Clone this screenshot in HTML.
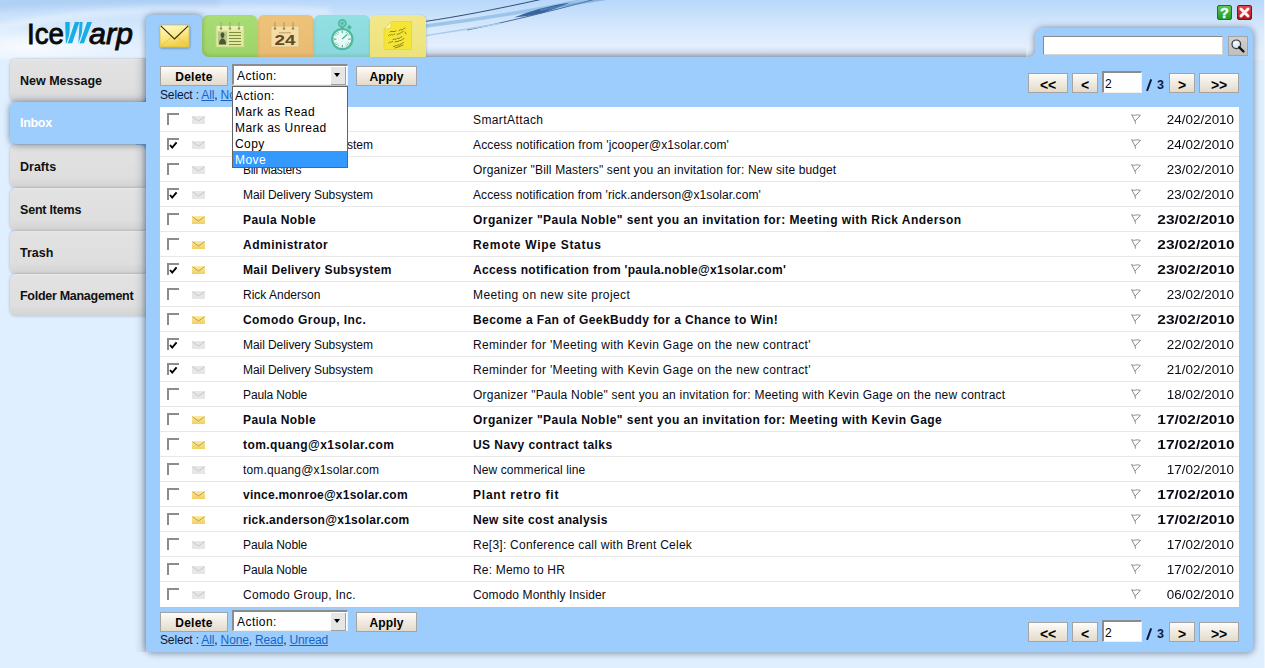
<!DOCTYPE html>
<html><head><meta charset="utf-8">
<style>
*{margin:0;padding:0;box-sizing:border-box}
html,body{width:1265px;height:668px;overflow:hidden}
body{position:relative;background:#dfefff;font-family:"Liberation Sans",sans-serif;color:#000}
.abs{position:absolute}
#topbg{position:absolute;left:0;top:0;width:1265px;height:60px;background:linear-gradient(#b7d7fa 0px,#cce3fb 18px,#dbebfd 34px,#e3effd 46px,#e6f1fd 58px)}
#panelwrap{position:absolute;left:0;top:0;width:1265px;height:668px;filter:drop-shadow(0 0 3.5px rgba(20,40,70,.42)) drop-shadow(1px 2px 3px rgba(20,40,70,.16))}
.blue{position:absolute;background:#9ccdfd}
.sbtn{position:absolute;left:10px;width:136px;height:43px;border-radius:6px;background:linear-gradient(#e9e9e9 0px,#e2e2e2 2px,#dedede 32px,#d2d2d2 43px);box-shadow:0 0 3px rgba(0,0,0,.25)}
.sbtn span{position:absolute;left:10px;top:14.5px;font-size:12.5px;font-weight:bold;color:#111;letter-spacing:0px}
.tab{position:absolute;top:15px;width:56px;height:42px;border-radius:6px 6px 0 0;box-shadow:inset 0 -2px 3px rgba(60,60,20,.12)}
.btn{position:absolute;height:20px;border:1px solid #a4a4a4;background:linear-gradient(#fefdfb 0%,#f1ece3 45%,#e3dacb 100%);font-size:11px;font-weight:bold;color:#000}
.btn span{position:absolute;left:0;right:0;top:4px;text-align:center;line-height:13px}
.pb span{font-size:14px;top:4.5px;letter-spacing:-0.3px}
.stxt{position:absolute;left:3px;top:3px;font-size:12px;line-height:14px;letter-spacing:0.45px;color:#000}
.arr{position:absolute;right:1px;top:1px;width:15px;height:18px;background:#e6e6e6;border-right:1px solid #a0a0a0;border-bottom:1px solid #a0a0a0}
.arr i{position:absolute;left:3px;top:6px;width:0;height:0;border-left:3.5px solid transparent;border-right:3.5px solid transparent;border-top:4px solid #000}
.seltxt{font-size:12px;color:#0c1838;letter-spacing:-0.15px}
.sel{position:absolute;background:#fff;border-top:2px solid #8c8c8c;border-left:2px solid #8c8c8c;border-right:1px solid #f0f0f0;border-bottom:1px solid #f0f0f0}
.lnk{color:#1565c8;text-decoration:underline}
#tbl{position:absolute;left:160px;top:107px;width:1079px;height:500px;background:#fff;box-shadow:0 1px 0 #a9c7e6}
.row:last-child{border-bottom-color:#fff}
.row{position:absolute;left:0;width:1079px;height:25px;border-bottom:1px solid #e8e8e8}
.row .cb{position:absolute;left:7px;top:6px;width:12px;height:12px;border-left:2px solid #8c8c8c;border-top:2px solid #8c8c8c}
.row .env{position:absolute;left:32px;top:9px;width:13px;height:8px}
.row .t{position:absolute;top:6px;font-size:12px;line-height:14px;white-space:nowrap;color:#0a0a14}
.row .s{left:83px}
.row .u{left:313px}
.row .fl{position:absolute;left:971px;top:7px;width:10px;height:10px;overflow:visible}
.row .d{position:absolute;right:4.5px;top:6px;font-size:12px;line-height:14px;color:#0a0a14}
.b .t,.b .d{font-weight:bold}
</style></head><body>
<div id="topbg"></div>
<svg class="abs" style="left:0;top:0" width="1265" height="58" viewBox="0 0 1265 58">
  <defs>
    <radialGradient id="glow" cx="0.5" cy="0.5" r="0.5"><stop offset="0" stop-color="#ffffff" stop-opacity=".8"/><stop offset="1" stop-color="#ffffff" stop-opacity="0"/></radialGradient>
  </defs>
  <filter id="gb" x="-20%" y="-100%" width="140%" height="300%"><feGaussianBlur stdDeviation="3"/></filter>
  <path d="M-20 6 Q80 -4 220 2" stroke="#a6c8ee" stroke-width="10" fill="none" opacity=".6" filter="url(#gb)"/>
  <path d="M-10 30 Q50 14 160 10 Q260 8 330 12" stroke="#ffffff" stroke-width="5" fill="none" opacity=".55" filter="url(#gb)"/>
  <ellipse cx="30" cy="46" rx="100" ry="18" fill="url(#glow)"/>
  <filter id="sb" x="-5%" y="-50%" width="110%" height="200%"><feGaussianBlur stdDeviation="0.45"/></filter>
  <g filter="url(#sb)">
  <path d="M426 26 Q520 14 600 -3" stroke="#8fbde4" stroke-width="3.6" fill="none" opacity=".8"/>
  <path d="M426 21.3 Q470 15 543 -1" stroke="#203c6a" stroke-width="0.9" fill="none"/>
  <path d="M514 17.5 Q540 7 570 2.5 Q543 15.5 514 17.5 Z" fill="#2a5692" opacity=".9"/>
  <path d="M467 30 Q520 19.5 596 -1" stroke="#2a4c82" stroke-width="0.8" fill="none"/>
  <path d="M426 35.6 Q462 30 500 23.5" stroke="#a8cbe8" stroke-width="1.3" fill="none"/>
  <path d="M540 10 Q580 3 625 -4" stroke="#5f94c8" stroke-width="2" fill="none" opacity=".55"/>
  </g>
</svg>

<!-- sidebar buttons -->
<div class="abs" style="left:136px;top:62px;width:12px;height:254px;background:#9ccdfd"></div>
<div class="sbtn" style="top:59px;border-radius:6px 0 6px 6px"><span>New Message</span></div>
<div class="sbtn" style="top:145px;border-radius:6px 6px 0 6px"><span>Drafts</span></div>
<div class="sbtn" style="top:188px;border-radius:6px 0 0 6px"><span style="letter-spacing:-0.2px">Sent Items</span></div>
<div class="sbtn" style="top:231px;border-radius:6px 0 0 6px"><span>Trash</span></div>
<div class="sbtn" style="top:274px;height:42px;border-radius:6px 0 0 6px"><span style="letter-spacing:-0.28px">Folder Management</span></div>

<!-- logo -->
<svg class="abs" style="left:0;top:0" width="146" height="58" viewBox="0 0 146 58">
  <text x="27" y="44" font-family="Liberation Sans" font-size="30" fill="#0a0a0a" stroke="#0a0a0a" stroke-width="0.9" textLength="37" lengthAdjust="spacingAndGlyphs">Ice</text>
  <g fill="#19ade6">
    <path d="M65.2 22 L69.8 22 L69.2 43.3 L65.8 43.3 Z"/>
    <path d="M67.3 43.3 L74.3 22" stroke="#e6f6ff" stroke-width="1.5"/>
    <path d="M67.8 43.3 L72.2 43.3 L79.4 22 L74.8 22 Z"/>
    <path d="M79.6 22 L82.6 22 L81.2 43.3 L78.4 43.3 Z"/>
    <path d="M79.3 43.3 L86.5 22" stroke="#e6f6ff" stroke-width="1.5"/>
    <path d="M79.8 43.3 L83.9 43.3 L92 22 L87 22 Z"/>
  </g>
  <text x="89" y="44" font-family="Liberation Sans" font-style="italic" font-size="30" fill="#0a0a0a" stroke="#0a0a0a" stroke-width="0.9" textLength="44" lengthAdjust="spacingAndGlyphs">arp</text>
</svg>
<div class="abs" style="left:420px;top:46px;width:606px;height:11px;background:linear-gradient(rgba(60,80,110,0),rgba(60,80,110,.1) 60%,rgba(60,80,110,.22))"></div>
<div class="abs" style="left:134px;top:58px;width:12px;height:594px;background:linear-gradient(to right,rgba(60,80,110,0),rgba(60,80,110,.07) 50%,rgba(60,80,110,.2))"></div>
<!-- panel (with shadow) -->
<div id="panelwrap">
  <div class="blue" style="left:146px;top:57px;width:1107px;height:595px;border-radius:0 0 6px 6px"></div>
  <div class="blue" style="left:146px;top:15px;width:56px;height:50px;border-radius:6px 6px 0 0"></div>
  <div class="blue" style="left:1035px;top:28px;width:218px;height:40px;border-radius:8px 7px 0 0"></div>
  <div class="abs" style="left:1029px;top:51px;width:6px;height:6px;background:radial-gradient(circle at 0 0,transparent 5.5px,#9ccdfd 6px)"></div>
  <div class="blue" style="left:10px;top:102px;width:150px;height:42px;border-radius:6px 0 0 6px"></div>
</div>
<div class="abs" style="left:20px;top:116px;font-size:12.5px;font-weight:bold;color:#fff;letter-spacing:-0.3px">Inbox</div>

<!-- other tabs -->
<div class="abs" style="left:200px;top:48px;width:10px;height:10px;background:#9ccdfd"></div>
<div class="tab" style="left:202px;background:linear-gradient(#a8dc74,#9dd46a);border-radius:7px 7px 0 7px;box-shadow:inset 2px -2px 3px rgba(60,60,20,.14)"></div>
<div class="tab" style="left:258px;background:linear-gradient(#efc27a,#e9bb72);border-radius:6px 6px 0 0"></div>
<div class="tab" style="left:314px;background:linear-gradient(#92e0e2,#8ad8dc);border-radius:6px 6px 0 0"></div>
<div class="tab" style="left:370px;background:linear-gradient(#f2e88a,#ece27c);border-radius:6px 6px 0 0;box-shadow:1px 0 2px rgba(0,0,0,.12)"></div>
<svg class="abs" style="left:202px;top:15px" width="224" height="42" viewBox="0 0 224 42">
  <!-- contacts -->
  <rect x="14" y="11" width="28" height="21" fill="#dfeaa0" stroke="#c4d27c" stroke-width="0.8"/>
  <rect x="15" y="11" width="26" height="4" fill="#e9f0b8"/>
  <g stroke="#9aab58" stroke-width="1" fill="none"><path d="M19 7 V13 M28 7 V13 M37 7 V13"/></g><g fill="#8a9c48"><circle cx="19" cy="13.6" r="1.2"/><circle cx="28" cy="13.6" r="1.2"/><circle cx="37" cy="13.6" r="1.2"/></g>
  <rect x="16" y="16.5" width="9" height="13" fill="#b9c68a"/>
  <path d="M17 29.5 Q17 24 20.5 23.5 Q18.3 22 18.5 19.5 Q19 17.3 20.5 17.3 Q22 17.3 22.5 19.5 Q22.7 22 20.5 23.5 Q24 24 24 29.5 Z" fill="#4b5a2c"/>
  <g stroke="#7f8f3c" stroke-width="1"><path d="M27 17.5 H39 M27 20.5 H39 M27 23.5 H39 M27 26.5 H39 M27 29.5 H39"/></g>
  <!-- calendar -->
  <rect x="69" y="11" width="28" height="21" fill="#f5dca2" stroke="#dcbc78" stroke-width="0.8"/>
  <g stroke="#b09060" stroke-width="1" fill="none"><path d="M73 7 V13 M82 7 V13 M91 7 V13"/></g><g fill="#a08050"><circle cx="73" cy="13.6" r="1.2"/><circle cx="82" cy="13.6" r="1.2"/><circle cx="91" cy="13.6" r="1.2"/></g>
  <path d="M77 17.8 H89" stroke="#a08050" stroke-width="0.7"/>
  <text x="83" y="30" text-anchor="middle" font-family="Liberation Sans" font-weight="bold" font-size="14" fill="#5e4a28" textLength="21" lengthAdjust="spacingAndGlyphs">24</text>
  <!-- stopwatch -->
  <circle cx="140.3" cy="8.4" r="3.6" fill="#7fcfc0" stroke="#4fb89f" stroke-width="1.6"/>
  <circle cx="140.3" cy="8.4" r="1.3" fill="#4fb89f"/>
  <rect x="138.9" y="11.5" width="2.8" height="2.5" fill="#4fb89f"/>
  <rect x="145.6" y="10.6" width="3.6" height="3.4" fill="#4fb89f" transform="rotate(40 147.4 12.3)"/>
  <circle cx="140.3" cy="24.1" r="11.2" fill="#4fb89f"/>
  <circle cx="140.3" cy="24.1" r="9" fill="#e8f8f5"/>
  <g stroke="#4fb89f" stroke-width="1.2">
    <path d="M140.3 15.6 V18.2 M140.3 30 V32.6 M131.8 24.1 H134.4 M146.2 24.1 H148.8"/>
    <path d="M134.3 18.1 L135.9 19.7 M144.7 28.5 L146.3 30.1 M134.3 30.1 L135.9 28.5 M144.7 19.7 L146.3 18.1" stroke-width="1"/>
    <path d="M136 16.9 L136.7 18.2 M144.6 16.9 L143.9 18.2 M133.1 19.8 L134.4 20.5 M147.5 19.8 L146.2 20.5 M133.1 28.4 L134.4 27.7 M147.5 28.4 L146.2 27.7 M136 31.3 L136.7 30 M144.6 31.3 L143.9 30" stroke-width="0.8"/>
    <path d="M140.3 24.1 L145 19.6" stroke-width="1.4"/>
  </g>
  <!-- note -->
  <path d="M189.5 6.5 L209.5 6.5 L209.5 34.5 L182 34.5 L182 14 Z" fill="#f5e534" stroke="#e0cc3a" stroke-width="0.6"/>
  <path d="M182 14 L189.5 6.5 L188.5 13 Z" fill="#fbf6b0" stroke="#d8c850" stroke-width="0.5"/>
  <g stroke="#6e6220" stroke-width="0.75" fill="none" stroke-linecap="round">
    <path d="M188 17 q1 -2 2 0 q1 -2 2 0 q1 -2 2 -1 M197 15.5 q2 -1.5 3 -0.5 q1 -1 3 -2"/>
    <path d="M186.5 20.5 q1 -1.5 2 0 q1 -2 2 -0.5 q1 -1 2 -1 M195 19.5 q2 -1 3 -1 q1 -1 3 -2 M203 17 l1 2"/>
    <path d="M191 24.5 q2 -1 3 0 q1 -2 3 -1 q1 -1 3 -2"/>
    <path d="M186.5 28 q1 -1.5 2 -0.5 q1 -1 2 -1 M193 27 q2 -1 3 -0.5 q2 -1.5 3 -1 q1 -1 3 -2"/>
    <path d="M191.5 31.5 q2 -0.5 3 -1 q2 -1 3 -0.5 q2 -1.5 4 -2.5 M193 33 q4 -1 8 -3"/>
  </g>
</svg>

<!-- mail icon -->
<svg class="abs" style="left:158px;top:23px" width="34" height="28" viewBox="0 0 34 28">
  <defs><linearGradient id="eg" x1="0" y1="0" x2="0.3" y2="1"><stop offset="0" stop-color="#fffcc8"/><stop offset="0.55" stop-color="#fbe98a"/><stop offset="1" stop-color="#f1cf48"/></linearGradient>
  <filter id="es" x="-20%" y="-20%" width="140%" height="150%"><feDropShadow dx="0.5" dy="1" stdDeviation="0.8" flood-color="#000" flood-opacity="0.35"/></filter></defs>
  <rect x="2" y="2" width="29" height="22" rx="1" fill="url(#eg)" stroke="#d6b84a" stroke-width="0.7" filter="url(#es)"/>
  <path d="M2.5 23.5 L13 14.5 M30.5 23.5 L20 14.5" fill="none" stroke="#d9bd55" stroke-width="0.7"/>
  <path d="M2.8 2.8 L16.5 16 L30.2 2.8" fill="none" stroke="#2e2818" stroke-width="1.05"/>
</svg>

<!-- help/close -->
<svg class="abs" style="left:1216px;top:4px" width="38" height="18" viewBox="0 0 38 18">
  <defs>
    <linearGradient id="hg" x1="0" y1="0" x2="0" y2="1"><stop offset="0" stop-color="#5cc95a"/><stop offset="1" stop-color="#1f9a22"/></linearGradient>
    <linearGradient id="cg" x1="0" y1="0" x2="0" y2="1"><stop offset="0" stop-color="#e8474c"/><stop offset="1" stop-color="#b5121a"/></linearGradient>
  </defs>
  <rect x="1.5" y="1.5" width="14" height="14" rx="1.5" fill="url(#hg)" stroke="#177a1a" stroke-width="1"/>
  <text x="8.5" y="14" text-anchor="middle" font-family="Liberation Sans" font-weight="bold" font-size="14.5" fill="#f8fff4" stroke="#f8fff4" stroke-width="0.4">?</text>
  <rect x="21.5" y="1.5" width="14" height="14" rx="1.5" fill="url(#cg)" stroke="#8a0c12" stroke-width="1"/>
  <path d="M25 5 L32 12 M32 5 L25 12" stroke="#fff4f4" stroke-width="3" stroke-linecap="round"/>
</svg>

<!-- search -->
<div class="abs" style="left:1043px;top:36px;width:180px;height:19px;background:#fff;border:1px solid #8a8a8a;border-right-color:#d4d4d4;border-bottom-color:#d4d4d4"></div>
<svg class="abs" style="left:1228px;top:36px" width="20" height="20" viewBox="0 0 20 20">
  <defs><linearGradient id="sg" x1="0" y1="0" x2="0" y2="1"><stop offset="0" stop-color="#d2d2d2"/><stop offset="1" stop-color="#bdbdbd"/></linearGradient>
  <radialGradient id="lens" cx="0.4" cy="0.35" r="0.7"><stop offset="0" stop-color="#ffffff"/><stop offset="1" stop-color="#bcd8f0"/></radialGradient></defs>
  <rect x="0.5" y="0.5" width="19" height="19" fill="url(#sg)" stroke="#a4a4a4" stroke-width="1"/>
  <circle cx="8.3" cy="8.3" r="4.3" fill="url(#lens)" stroke="#3a3a3a" stroke-width="1.2"/>
  <path d="M11.3 11.3 L15.5 15.5" stroke="#111" stroke-width="2.4" stroke-linecap="round"/>
</svg>

<!-- top toolbar -->
<div class="btn" style="left:160px;top:66px;width:68px"><span style="letter-spacing:0.25px;font-size:12px">Delete</span></div>
<div class="sel" style="left:232px;top:64px;width:116px;height:21px"><span class="stxt">Action:</span><div class="arr"><i></i></div></div>
<div class="btn" style="left:356px;top:66px;width:61px"><span style="letter-spacing:0.1px;font-size:12px">Apply</span></div>
<div class="abs seltxt" style="left:160px;top:88px">Select : <span class="lnk">All</span>, <span class="lnk">None</span>, <span class="lnk">Read</span>, <span class="lnk">Unread</span></div>
<div class="btn pb" style="left:1028px;top:73px;width:40px"><span>&lt;&lt;</span></div>
<div class="btn pb" style="left:1072px;top:73px;width:26px"><span>&lt;</span></div>
<div class="sel" style="left:1102px;top:71px;width:40px;height:22px"><span class="stxt" style="left:1px;top:4px">2</span></div>
<svg class="abs" style="left:1145px;top:78px" width="8" height="14"><path d="M2 12.8 L6.2 1.3" stroke="#0c1a40" stroke-width="2"/></svg><div class="abs" style="left:1157px;top:78px;font-size:12.5px;font-weight:bold;color:#0c1a40">3</div>
<div class="btn pb" style="left:1169px;top:73px;width:26px"><span>&gt;</span></div>
<div class="btn pb" style="left:1199px;top:73px;width:40px"><span>&gt;&gt;</span></div>

<div id="tbl">
<div class="row" style="top:0px"><div class="cb"></div><svg class="env" viewBox="0 0 13 8"><rect x="0" y="0" width="13" height="8" fill="#e6e6e6"/><path d="M0.5 0.8 L6.5 5 L12.5 0.8" fill="none" stroke="#c8c8c8" stroke-width="1"/></svg><div class="t s" style="letter-spacing:-0.120px">Paula Noble</div><div class="t u" style="letter-spacing:0.400px">SmartAttach</div><svg class="fl" viewBox="0 0 10 10"><path d="M0.6 0.6 Q2.8 1.9 4.3 1.1 Q6 0.3 9.4 1.4 L4 7 Z M4 7 L4.5 9.6" fill="none" stroke="#8e8e8e" stroke-width="1" stroke-linejoin="round"/></svg><div class="d" style="transform:scaleX(1.12);transform-origin:100% 50%">24/02/2010</div></div>
<div class="row" style="top:25px"><div class="cb"><svg class="ck" width="10" height="9" viewBox="0 0 10 9" style="position:absolute;left:0px;top:1px"><path d="M1 4 L3.2 6.6 L7.6 1.4" fill="none" stroke="#000" stroke-width="1.9"/></svg></div><svg class="env" viewBox="0 0 13 8"><rect x="0" y="0" width="13" height="8" fill="#e6e6e6"/><path d="M0.5 0.8 L6.5 5 L12.5 0.8" fill="none" stroke="#c8c8c8" stroke-width="1"/></svg><div class="t s" style="letter-spacing:-0.068px">Mail Delivery Subsystem</div><div class="t u" style="letter-spacing:0.127px">Access notification from 'jcooper@x1solar.com'</div><svg class="fl" viewBox="0 0 10 10"><path d="M0.6 0.6 Q2.8 1.9 4.3 1.1 Q6 0.3 9.4 1.4 L4 7 Z M4 7 L4.5 9.6" fill="none" stroke="#8e8e8e" stroke-width="1" stroke-linejoin="round"/></svg><div class="d" style="transform:scaleX(1.12);transform-origin:100% 50%">24/02/2010</div></div>
<div class="row" style="top:50px"><div class="cb"></div><svg class="env" viewBox="0 0 13 8"><rect x="0" y="0" width="13" height="8" fill="#e6e6e6"/><path d="M0.5 0.8 L6.5 5 L12.5 0.8" fill="none" stroke="#c8c8c8" stroke-width="1"/></svg><div class="t s" style="letter-spacing:-0.318px">Bill Masters</div><div class="t u" style="letter-spacing:0.157px">Organizer "Bill Masters" sent you an invitation for: New site budget</div><svg class="fl" viewBox="0 0 10 10"><path d="M0.6 0.6 Q2.8 1.9 4.3 1.1 Q6 0.3 9.4 1.4 L4 7 Z M4 7 L4.5 9.6" fill="none" stroke="#8e8e8e" stroke-width="1" stroke-linejoin="round"/></svg><div class="d" style="transform:scaleX(1.12);transform-origin:100% 50%">23/02/2010</div></div>
<div class="row" style="top:75px"><div class="cb"><svg class="ck" width="10" height="9" viewBox="0 0 10 9" style="position:absolute;left:0px;top:1px"><path d="M1 4 L3.2 6.6 L7.6 1.4" fill="none" stroke="#000" stroke-width="1.9"/></svg></div><svg class="env" viewBox="0 0 13 8"><rect x="0" y="0" width="13" height="8" fill="#e6e6e6"/><path d="M0.5 0.8 L6.5 5 L12.5 0.8" fill="none" stroke="#c8c8c8" stroke-width="1"/></svg><div class="t s" style="letter-spacing:-0.068px">Mail Delivery Subsystem</div><div class="t u" style="letter-spacing:0.098px">Access notification from 'rick.anderson@x1solar.com'</div><svg class="fl" viewBox="0 0 10 10"><path d="M0.6 0.6 Q2.8 1.9 4.3 1.1 Q6 0.3 9.4 1.4 L4 7 Z M4 7 L4.5 9.6" fill="none" stroke="#8e8e8e" stroke-width="1" stroke-linejoin="round"/></svg><div class="d" style="transform:scaleX(1.12);transform-origin:100% 50%">23/02/2010</div></div>
<div class="row b" style="top:100px"><div class="cb"></div><svg class="env" viewBox="0 0 13 8"><defs><linearGradient id="yg" x1="0" y1="0" x2="0" y2="1"><stop offset="0" stop-color="#fbeaa0"/><stop offset="1" stop-color="#f2d060"/></linearGradient></defs><rect x="0" y="0" width="13" height="8" fill="url(#yg)"/><path d="M0.5 0.8 L6.5 5 L12.5 0.8" fill="none" stroke="#b8a060" stroke-width="1"/></svg><div class="t s" style="letter-spacing:0.400px">Paula Noble</div><div class="t u" style="letter-spacing:0.455px">Organizer "Paula Noble" sent you an invitation for: Meeting with Rick Anderson</div><svg class="fl" viewBox="0 0 10 10"><path d="M0.6 0.6 Q2.8 1.9 4.3 1.1 Q6 0.3 9.4 1.4 L4 7 Z M4 7 L4.5 9.6" fill="none" stroke="#8e8e8e" stroke-width="1" stroke-linejoin="round"/></svg><div class="d" style="font-size:12.5px;transform:scaleX(1.235);transform-origin:100% 50%">23/02/2010</div></div>
<div class="row b" style="top:125px"><div class="cb"></div><svg class="env" viewBox="0 0 13 8"><defs><linearGradient id="yg" x1="0" y1="0" x2="0" y2="1"><stop offset="0" stop-color="#fbeaa0"/><stop offset="1" stop-color="#f2d060"/></linearGradient></defs><rect x="0" y="0" width="13" height="8" fill="url(#yg)"/><path d="M0.5 0.8 L6.5 5 L12.5 0.8" fill="none" stroke="#b8a060" stroke-width="1"/></svg><div class="t s" style="letter-spacing:0.500px">Administrator</div><div class="t u" style="letter-spacing:0.706px">Remote Wipe Status</div><svg class="fl" viewBox="0 0 10 10"><path d="M0.6 0.6 Q2.8 1.9 4.3 1.1 Q6 0.3 9.4 1.4 L4 7 Z M4 7 L4.5 9.6" fill="none" stroke="#8e8e8e" stroke-width="1" stroke-linejoin="round"/></svg><div class="d" style="font-size:12.5px;transform:scaleX(1.235);transform-origin:100% 50%">23/02/2010</div></div>
<div class="row b" style="top:150px"><div class="cb"><svg class="ck" width="10" height="9" viewBox="0 0 10 9" style="position:absolute;left:0px;top:1px"><path d="M1 4 L3.2 6.6 L7.6 1.4" fill="none" stroke="#000" stroke-width="1.9"/></svg></div><svg class="env" viewBox="0 0 13 8"><defs><linearGradient id="yg" x1="0" y1="0" x2="0" y2="1"><stop offset="0" stop-color="#fbeaa0"/><stop offset="1" stop-color="#f2d060"/></linearGradient></defs><rect x="0" y="0" width="13" height="8" fill="url(#yg)"/><path d="M0.5 0.8 L6.5 5 L12.5 0.8" fill="none" stroke="#b8a060" stroke-width="1"/></svg><div class="t s" style="letter-spacing:0.345px">Mail Delivery Subsystem</div><div class="t u" style="letter-spacing:0.327px">Access notification from 'paula.noble@x1solar.com'</div><svg class="fl" viewBox="0 0 10 10"><path d="M0.6 0.6 Q2.8 1.9 4.3 1.1 Q6 0.3 9.4 1.4 L4 7 Z M4 7 L4.5 9.6" fill="none" stroke="#8e8e8e" stroke-width="1" stroke-linejoin="round"/></svg><div class="d" style="font-size:12.5px;transform:scaleX(1.235);transform-origin:100% 50%">23/02/2010</div></div>
<div class="row" style="top:175px"><div class="cb"></div><svg class="env" viewBox="0 0 13 8"><rect x="0" y="0" width="13" height="8" fill="#e6e6e6"/><path d="M0.5 0.8 L6.5 5 L12.5 0.8" fill="none" stroke="#c8c8c8" stroke-width="1"/></svg><div class="t s" style="letter-spacing:0.000px">Rick Anderson</div><div class="t u" style="letter-spacing:0.412px">Meeting on new site project</div><svg class="fl" viewBox="0 0 10 10"><path d="M0.6 0.6 Q2.8 1.9 4.3 1.1 Q6 0.3 9.4 1.4 L4 7 Z M4 7 L4.5 9.6" fill="none" stroke="#8e8e8e" stroke-width="1" stroke-linejoin="round"/></svg><div class="d" style="transform:scaleX(1.12);transform-origin:100% 50%">23/02/2010</div></div>
<div class="row b" style="top:200px"><div class="cb"></div><svg class="env" viewBox="0 0 13 8"><defs><linearGradient id="yg" x1="0" y1="0" x2="0" y2="1"><stop offset="0" stop-color="#fbeaa0"/><stop offset="1" stop-color="#f2d060"/></linearGradient></defs><rect x="0" y="0" width="13" height="8" fill="url(#yg)"/><path d="M0.5 0.8 L6.5 5 L12.5 0.8" fill="none" stroke="#b8a060" stroke-width="1"/></svg><div class="t s" style="letter-spacing:0.435px">Comodo Group, Inc.</div><div class="t u" style="letter-spacing:0.416px">Become a Fan of GeekBuddy for a Chance to Win!</div><svg class="fl" viewBox="0 0 10 10"><path d="M0.6 0.6 Q2.8 1.9 4.3 1.1 Q6 0.3 9.4 1.4 L4 7 Z M4 7 L4.5 9.6" fill="none" stroke="#8e8e8e" stroke-width="1" stroke-linejoin="round"/></svg><div class="d" style="font-size:12.5px;transform:scaleX(1.235);transform-origin:100% 50%">23/02/2010</div></div>
<div class="row" style="top:225px"><div class="cb"><svg class="ck" width="10" height="9" viewBox="0 0 10 9" style="position:absolute;left:0px;top:1px"><path d="M1 4 L3.2 6.6 L7.6 1.4" fill="none" stroke="#000" stroke-width="1.9"/></svg></div><svg class="env" viewBox="0 0 13 8"><rect x="0" y="0" width="13" height="8" fill="#e6e6e6"/><path d="M0.5 0.8 L6.5 5 L12.5 0.8" fill="none" stroke="#c8c8c8" stroke-width="1"/></svg><div class="t s" style="letter-spacing:-0.068px">Mail Delivery Subsystem</div><div class="t u" style="letter-spacing:0.328px">Reminder for 'Meeting with Kevin Gage on the new contract'</div><svg class="fl" viewBox="0 0 10 10"><path d="M0.6 0.6 Q2.8 1.9 4.3 1.1 Q6 0.3 9.4 1.4 L4 7 Z M4 7 L4.5 9.6" fill="none" stroke="#8e8e8e" stroke-width="1" stroke-linejoin="round"/></svg><div class="d" style="transform:scaleX(1.12);transform-origin:100% 50%">22/02/2010</div></div>
<div class="row" style="top:250px"><div class="cb"><svg class="ck" width="10" height="9" viewBox="0 0 10 9" style="position:absolute;left:0px;top:1px"><path d="M1 4 L3.2 6.6 L7.6 1.4" fill="none" stroke="#000" stroke-width="1.9"/></svg></div><svg class="env" viewBox="0 0 13 8"><rect x="0" y="0" width="13" height="8" fill="#e6e6e6"/><path d="M0.5 0.8 L6.5 5 L12.5 0.8" fill="none" stroke="#c8c8c8" stroke-width="1"/></svg><div class="t s" style="letter-spacing:-0.068px">Mail Delivery Subsystem</div><div class="t u" style="letter-spacing:0.328px">Reminder for 'Meeting with Kevin Gage on the new contract'</div><svg class="fl" viewBox="0 0 10 10"><path d="M0.6 0.6 Q2.8 1.9 4.3 1.1 Q6 0.3 9.4 1.4 L4 7 Z M4 7 L4.5 9.6" fill="none" stroke="#8e8e8e" stroke-width="1" stroke-linejoin="round"/></svg><div class="d" style="transform:scaleX(1.12);transform-origin:100% 50%">21/02/2010</div></div>
<div class="row" style="top:275px"><div class="cb"></div><svg class="env" viewBox="0 0 13 8"><rect x="0" y="0" width="13" height="8" fill="#e6e6e6"/><path d="M0.5 0.8 L6.5 5 L12.5 0.8" fill="none" stroke="#c8c8c8" stroke-width="1"/></svg><div class="t s" style="letter-spacing:-0.120px">Paula Noble</div><div class="t u" style="letter-spacing:0.220px">Organizer "Paula Noble" sent you an invitation for: Meeting with Kevin Gage on the new contract</div><svg class="fl" viewBox="0 0 10 10"><path d="M0.6 0.6 Q2.8 1.9 4.3 1.1 Q6 0.3 9.4 1.4 L4 7 Z M4 7 L4.5 9.6" fill="none" stroke="#8e8e8e" stroke-width="1" stroke-linejoin="round"/></svg><div class="d" style="transform:scaleX(1.12);transform-origin:100% 50%">18/02/2010</div></div>
<div class="row b" style="top:300px"><div class="cb"></div><svg class="env" viewBox="0 0 13 8"><defs><linearGradient id="yg" x1="0" y1="0" x2="0" y2="1"><stop offset="0" stop-color="#fbeaa0"/><stop offset="1" stop-color="#f2d060"/></linearGradient></defs><rect x="0" y="0" width="13" height="8" fill="url(#yg)"/><path d="M0.5 0.8 L6.5 5 L12.5 0.8" fill="none" stroke="#b8a060" stroke-width="1"/></svg><div class="t s" style="letter-spacing:0.400px">Paula Noble</div><div class="t u" style="letter-spacing:0.459px">Organizer "Paula Noble" sent you an invitation for: Meeting with Kevin Gage</div><svg class="fl" viewBox="0 0 10 10"><path d="M0.6 0.6 Q2.8 1.9 4.3 1.1 Q6 0.3 9.4 1.4 L4 7 Z M4 7 L4.5 9.6" fill="none" stroke="#8e8e8e" stroke-width="1" stroke-linejoin="round"/></svg><div class="d" style="font-size:12.5px;transform:scaleX(1.235);transform-origin:100% 50%">17/02/2010</div></div>
<div class="row b" style="top:325px"><div class="cb"></div><svg class="env" viewBox="0 0 13 8"><defs><linearGradient id="yg" x1="0" y1="0" x2="0" y2="1"><stop offset="0" stop-color="#fbeaa0"/><stop offset="1" stop-color="#f2d060"/></linearGradient></defs><rect x="0" y="0" width="13" height="8" fill="url(#yg)"/><path d="M0.5 0.8 L6.5 5 L12.5 0.8" fill="none" stroke="#b8a060" stroke-width="1"/></svg><div class="t s" style="letter-spacing:0.420px">tom.quang@x1solar.com</div><div class="t u" style="letter-spacing:0.429px">US Navy contract talks</div><svg class="fl" viewBox="0 0 10 10"><path d="M0.6 0.6 Q2.8 1.9 4.3 1.1 Q6 0.3 9.4 1.4 L4 7 Z M4 7 L4.5 9.6" fill="none" stroke="#8e8e8e" stroke-width="1" stroke-linejoin="round"/></svg><div class="d" style="font-size:12.5px;transform:scaleX(1.235);transform-origin:100% 50%">17/02/2010</div></div>
<div class="row" style="top:350px"><div class="cb"></div><svg class="env" viewBox="0 0 13 8"><rect x="0" y="0" width="13" height="8" fill="#e6e6e6"/><path d="M0.5 0.8 L6.5 5 L12.5 0.8" fill="none" stroke="#c8c8c8" stroke-width="1"/></svg><div class="t s" style="letter-spacing:0.160px">tom.quang@x1solar.com</div><div class="t u" style="letter-spacing:0.083px">New commerical line</div><svg class="fl" viewBox="0 0 10 10"><path d="M0.6 0.6 Q2.8 1.9 4.3 1.1 Q6 0.3 9.4 1.4 L4 7 Z M4 7 L4.5 9.6" fill="none" stroke="#8e8e8e" stroke-width="1" stroke-linejoin="round"/></svg><div class="d" style="transform:scaleX(1.12);transform-origin:100% 50%">17/02/2010</div></div>
<div class="row b" style="top:375px"><div class="cb"></div><svg class="env" viewBox="0 0 13 8"><defs><linearGradient id="yg" x1="0" y1="0" x2="0" y2="1"><stop offset="0" stop-color="#fbeaa0"/><stop offset="1" stop-color="#f2d060"/></linearGradient></defs><rect x="0" y="0" width="13" height="8" fill="url(#yg)"/><path d="M0.5 0.8 L6.5 5 L12.5 0.8" fill="none" stroke="#b8a060" stroke-width="1"/></svg><div class="t s" style="letter-spacing:0.239px">vince.monroe@x1solar.com</div><div class="t u" style="letter-spacing:0.771px">Plant retro fit</div><svg class="fl" viewBox="0 0 10 10"><path d="M0.6 0.6 Q2.8 1.9 4.3 1.1 Q6 0.3 9.4 1.4 L4 7 Z M4 7 L4.5 9.6" fill="none" stroke="#8e8e8e" stroke-width="1" stroke-linejoin="round"/></svg><div class="d" style="font-size:12.5px;transform:scaleX(1.235);transform-origin:100% 50%">17/02/2010</div></div>
<div class="row b" style="top:400px"><div class="cb"></div><svg class="env" viewBox="0 0 13 8"><defs><linearGradient id="yg" x1="0" y1="0" x2="0" y2="1"><stop offset="0" stop-color="#fbeaa0"/><stop offset="1" stop-color="#f2d060"/></linearGradient></defs><rect x="0" y="0" width="13" height="8" fill="url(#yg)"/><path d="M0.5 0.8 L6.5 5 L12.5 0.8" fill="none" stroke="#b8a060" stroke-width="1"/></svg><div class="t s" style="letter-spacing:0.271px">rick.anderson@x1solar.com</div><div class="t u" style="letter-spacing:0.333px">New site cost analysis</div><svg class="fl" viewBox="0 0 10 10"><path d="M0.6 0.6 Q2.8 1.9 4.3 1.1 Q6 0.3 9.4 1.4 L4 7 Z M4 7 L4.5 9.6" fill="none" stroke="#8e8e8e" stroke-width="1" stroke-linejoin="round"/></svg><div class="d" style="font-size:12.5px;transform:scaleX(1.235);transform-origin:100% 50%">17/02/2010</div></div>
<div class="row" style="top:425px"><div class="cb"></div><svg class="env" viewBox="0 0 13 8"><rect x="0" y="0" width="13" height="8" fill="#e6e6e6"/><path d="M0.5 0.8 L6.5 5 L12.5 0.8" fill="none" stroke="#c8c8c8" stroke-width="1"/></svg><div class="t s" style="letter-spacing:-0.120px">Paula Noble</div><div class="t u" style="letter-spacing:0.247px">Re[3]: Conference call with Brent Celek</div><svg class="fl" viewBox="0 0 10 10"><path d="M0.6 0.6 Q2.8 1.9 4.3 1.1 Q6 0.3 9.4 1.4 L4 7 Z M4 7 L4.5 9.6" fill="none" stroke="#8e8e8e" stroke-width="1" stroke-linejoin="round"/></svg><div class="d" style="transform:scaleX(1.12);transform-origin:100% 50%">17/02/2010</div></div>
<div class="row" style="top:450px"><div class="cb"></div><svg class="env" viewBox="0 0 13 8"><rect x="0" y="0" width="13" height="8" fill="#e6e6e6"/><path d="M0.5 0.8 L6.5 5 L12.5 0.8" fill="none" stroke="#c8c8c8" stroke-width="1"/></svg><div class="t s" style="letter-spacing:-0.120px">Paula Noble</div><div class="t u" style="letter-spacing:0.192px">Re: Memo to HR</div><svg class="fl" viewBox="0 0 10 10"><path d="M0.6 0.6 Q2.8 1.9 4.3 1.1 Q6 0.3 9.4 1.4 L4 7 Z M4 7 L4.5 9.6" fill="none" stroke="#8e8e8e" stroke-width="1" stroke-linejoin="round"/></svg><div class="d" style="transform:scaleX(1.12);transform-origin:100% 50%">17/02/2010</div></div>
<div class="row" style="top:475px"><div class="cb"></div><svg class="env" viewBox="0 0 13 8"><rect x="0" y="0" width="13" height="8" fill="#e6e6e6"/><path d="M0.5 0.8 L6.5 5 L12.5 0.8" fill="none" stroke="#c8c8c8" stroke-width="1"/></svg><div class="t s" style="letter-spacing:0.271px">Comodo Group, Inc.</div><div class="t u" style="letter-spacing:0.133px">Comodo Monthly Insider</div><svg class="fl" viewBox="0 0 10 10"><path d="M0.6 0.6 Q2.8 1.9 4.3 1.1 Q6 0.3 9.4 1.4 L4 7 Z M4 7 L4.5 9.6" fill="none" stroke="#8e8e8e" stroke-width="1" stroke-linejoin="round"/></svg><div class="d" style="transform:scaleX(1.12);transform-origin:100% 50%">06/02/2010</div></div>
</div><!--/tbl-->

<!-- bottom toolbar -->
<div class="btn" style="left:160px;top:612px;width:68px"><span style="letter-spacing:0.25px;font-size:12px">Delete</span></div>
<div class="sel" style="left:232px;top:610px;width:116px;height:21px"><span class="stxt">Action:</span><div class="arr"><i></i></div></div>
<div class="btn" style="left:356px;top:612px;width:61px"><span style="letter-spacing:0.1px;font-size:12px">Apply</span></div>
<div class="abs seltxt" style="left:160px;top:632.5px">Select : <span class="lnk">All</span>, <span class="lnk">None</span>, <span class="lnk">Read</span>, <span class="lnk">Unread</span></div>
<div class="btn pb" style="left:1028px;top:622px;width:40px"><span>&lt;&lt;</span></div>
<div class="btn pb" style="left:1072px;top:622px;width:26px"><span>&lt;</span></div>
<div class="sel" style="left:1102px;top:620px;width:40px;height:22px"><span class="stxt" style="left:1px;top:4px">2</span></div>
<svg class="abs" style="left:1145px;top:627px" width="8" height="14"><path d="M2 12.8 L6.2 1.3" stroke="#0c1a40" stroke-width="2"/></svg><div class="abs" style="left:1157px;top:627px;font-size:12.5px;font-weight:bold;color:#0c1a40">3</div>
<div class="btn pb" style="left:1169px;top:622px;width:26px"><span>&gt;</span></div>
<div class="btn pb" style="left:1199px;top:622px;width:40px"><span>&gt;&gt;</span></div>

<!-- dropdown -->
<div class="abs" style="left:232px;top:86px;width:116px;height:82px;background:#fff;border:1px solid #646464;font-size:12px;line-height:16px;letter-spacing:0.45px;color:#000">
  <div style="padding-left:2px;position:relative;top:1px">Action:</div>
  <div style="padding-left:2px;position:relative;top:1px">Mark as Read</div>
  <div style="padding-left:2px;position:relative;top:1px">Mark as Unread</div>
  <div style="padding-left:2px;position:relative;top:1px">Copy</div>
  <div style="padding-left:2px;background:#3399ff;color:#fff;height:16px"><span style="position:relative;top:1px">Move</span></div>
</div>
<div class="abs" style="left:1264px;top:0;width:1px;height:668px;background:#eef6ff"></div>
</body></html>
